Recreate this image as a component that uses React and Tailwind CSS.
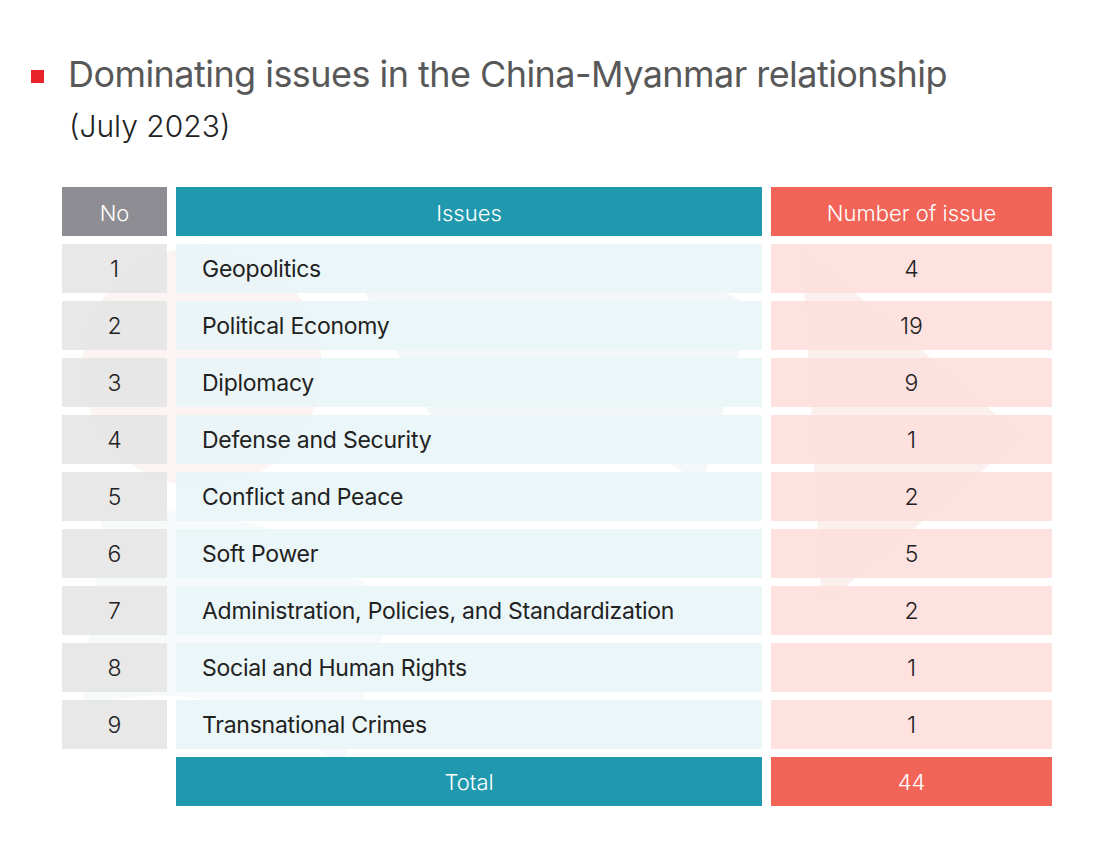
import React from "react";

const rows = [
  ["1", "Geopolitics", "4"],
  ["2", "Political Economy", "19"],
  ["3", "Diplomacy", "9"],
  ["4", "Defense and Security", "1"],
  ["5", "Conflict and Peace", "2"],
  ["6", "Soft Power", "5"],
  ["7", "Administration, Policies, and Standardization", "2"],
  ["8", "Social and Human Rights", "1"],
  ["9", "Transnational Crimes", "1"],
];

export default function App() {
  return (
    <div
      className="w-[1110px] h-[855px] bg-white relative overflow-hidden"
      style={{ fontFamily: "Inter, 'Noto Sans', sans-serif" }}
    >
      <div className="pt-[52px] pl-[31px]">
        <div className="flex items-center">
          <div className="w-[13px] h-[13px] bg-[#e8232a] mt-[4px]" />
          <div className="ml-[24px] text-[36px] leading-[44px] text-[#585858] tracking-[-0.55px]">
            Dominating issues in the China-Myanmar relationship
          </div>
        </div>
        <div className="ml-[38px] mt-[10px] text-[30px] leading-[40px] font-light text-[#222]">
          (July 2023)
        </div>
      </div>

      <div className="relative ml-[62px] mt-[41px] w-[990px]">
        <svg
          className="absolute inset-0 pointer-events-none"
          width="990"
          height="618"
          viewBox="0 0 990 618"
        >
          <circle cx="140" cy="180" r="120" fill="#f3d0d0" opacity="0.25" />
          <path d="M300 100 Q520 20 690 120 L640 300 Q520 200 380 250 Z" fill="#c9d5da" opacity="0.2" />
          <path d="M740 60 L960 250 L760 420 Z" fill="#f2b9b4" opacity="0.22" />
          <path d="M40 330 Q200 300 330 420 L280 580 Q160 480 20 520 Z" fill="#c8dde2" opacity="0.15" />
        </svg>
        <div className="relative grid grid-cols-[105px_586px_281px] gap-x-[9px] gap-y-[8px]">
          <div className="h-[49px] pt-[3px] bg-[#8e8d93] flex items-center justify-center text-white text-[22px] font-light">
            No
          </div>
          <div className="h-[49px] pt-[3px] bg-[#2098ae] flex items-center justify-center text-white text-[22px] font-light">
            Issues
          </div>
          <div className="h-[49px] pt-[3px] bg-[#f26457] flex items-center justify-center text-white text-[22px] font-light">
            Number of issue
          </div>
          {rows.map(([n, issue, num]) => (
            <React.Fragment key={n}>
              <div className="h-[49px] pt-[2px] bg-[#e6e6e6]/90 flex items-center justify-center text-[#222] text-[23px] font-light">
                {n}
              </div>
              <div className="h-[49px] pt-[2px] bg-[#e9f5f7]/90 flex items-center pl-[26px] text-[#222] text-[23px] tracking-[-0.25px]">
                {issue}
              </div>
              <div className="h-[49px] pt-[2px] bg-[#fddfdd]/90 flex items-center justify-center text-[#222] text-[23px] font-light">
                {num}
              </div>
            </React.Fragment>
          ))}
          <div />
          <div className="h-[49px] pt-[2px] bg-[#2098ae] flex items-center justify-center text-white text-[22px] font-light">
            Total
          </div>
          <div className="h-[49px] pt-[2px] bg-[#f26457] flex items-center justify-center text-white text-[22px] font-light">
            44
          </div>
        </div>
      </div>
    </div>
  );
}
